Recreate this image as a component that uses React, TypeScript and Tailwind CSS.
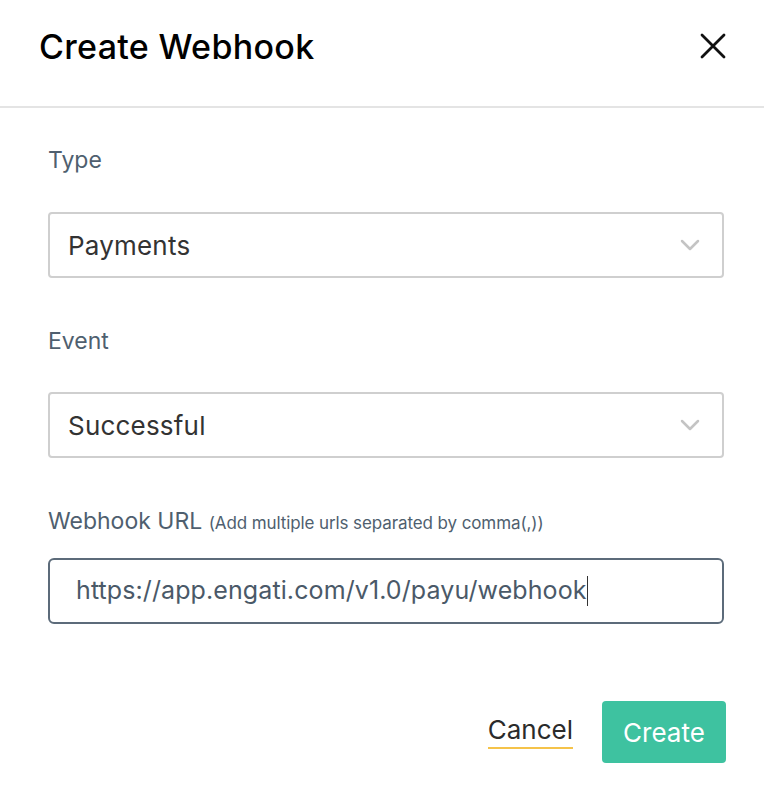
import React from "react";

const font = "font-['Inter','Noto_Sans',sans-serif]";

function Chevron() {
  return (
    <svg width="20" height="12" viewBox="0 0 20 12" fill="none">
      <path d="M2 2l8 8 8-8" stroke="#c4c4c4" strokeWidth="2.5" strokeLinecap="round" strokeLinejoin="round" />
    </svg>
  );
}

function SelectBox({ value }: { value: string }) {
  return (
    <div className="h-[66px] w-full border-2 border-[#cfcfcf] rounded-[4px] flex items-center justify-between pl-[18px] pr-[22px]">
      <span className="text-[26px] text-[#333333] tracking-[0.2px]">{value}</span>
      <Chevron />
    </div>
  );
}

export default function App() {
  return (
    <div className={`w-[764px] h-[794px] bg-white ${font}`}>
      <div className="h-[108px] flex items-center justify-between pl-[39px] pr-[38px] border-b-2 border-[#e4e4e4] pb-[14px]">
        <h1 className="text-[34px] text-black font-medium tracking-[0.3px]">Create Webhook</h1>
        <svg width="26" height="26" viewBox="0 0 26 26">
          <path d="M2 2l22 22M24 2L2 24" stroke="#111" strokeWidth="2.8" strokeLinecap="round" />
        </svg>
      </div>

      <div className="pl-[48px] pr-[40px] pt-[38px] flex flex-col">
        <label className="text-[23px] text-[#4f5f6f] leading-[28px]">Type</label>
        <div className="mt-[38px]">
          <SelectBox value="Payments" />
        </div>

        <label className="mt-[49px] text-[23px] text-[#4f5f6f] leading-[28px]">Event</label>
        <div className="mt-[37px]">
          <SelectBox value="Successful" />
        </div>

        <label className="mt-[49px] text-[23px] text-[#4f5f6f] leading-[28px]">
          Webhook URL <span className="text-[17px] tracking-[-0.1px]">(Add multiple urls separated by comma(,))</span>
        </label>
        <div className="mt-[21px] h-[66px] border-2 border-[#5c6b7a] rounded-[6px] flex items-center pl-[26px]">
          <span className="text-[25px] text-[#4a5968] tracking-[0.1px]">https://app.engati.com/v1.0/payu/webhook</span>
          <span className="w-[1.5px] h-[30px] bg-[#333]" />
        </div>

        <div className="mt-[77px] flex items-center justify-end gap-[29px] -mr-[2px]">
          <button className="text-[26px] text-[#2b2b2b] border-b-2 border-[#f5c34a] leading-[30px] pb-[2px]">
            Cancel
          </button>
          <button className="h-[62px] w-[124px] bg-[#3ec2a0] rounded-[4px] text-white text-[26px]">
            Create
          </button>
        </div>
      </div>
    </div>
  );
}
